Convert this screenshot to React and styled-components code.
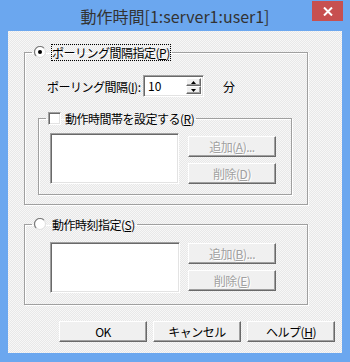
import styled, { createGlobalStyle } from "styled-components";

const GlobalStyle = createGlobalStyle`
  html, body {
    margin: 0;
    padding: 0;
  }
  body {
    font-family: "Noto Sans CJK JP", "Noto Sans", sans-serif;
    font-size: 12px;
    letter-spacing: -0.5px;
    color: #000;
  }
`;

const Window = styled.div`
  width: 350px;
  height: 362px;
  box-sizing: border-box;
  background: #6ba7ef;
  padding: 0 8px 9px;
  display: flex;
  flex-direction: column;
`;

const TitleBar = styled.div`
  height: 31px;
  display: grid;
  grid-template-columns: 1fr auto 1fr;
  align-items: center;
`;

const Title = styled.div`
  grid-column: 2;
  font-size: 16px;
  letter-spacing: 0;
  color: #333;
  white-space: nowrap;
  padding-top: 1px;
`;

const CloseButton = styled.div`
  grid-column: 3;
  justify-self: end;
  align-self: start;
  margin: 1px -1px 0 0;
  width: 31px;
  height: 20px;
  background: #c75050;
  display: flex;
  align-items: center;
  justify-content: center;
`;

const Client = styled.div`
  flex: 1;
  background: repeating-conic-gradient(#f7f7f7 0 25%, #e8e8e8 0 50%) 0 0 / 2px 2px;
  padding: 13px 7px 11px 16px;
  display: flex;
  flex-direction: column;
`;

const Group = styled.fieldset`
  margin: ${(p) => p.$mt || 0}px ${(p) => p.$mr || 0}px 0 0;
  padding: ${(p) => p.$pad};
  border: 1px solid #a0a0a0;
  box-shadow: inset 1px 1px #fff, 1px 1px #fff;
  min-width: 0;
`;

const Legend = styled.legend`
  height: 16px;
  padding: 0 2px;
  margin-left: ${(p) => p.$ml}px;
  display: flex;
  align-items: center;
  gap: ${(p) => p.$gap || 6}px;
  white-space: nowrap;
`;

const Focus = styled.span`
  outline: 1px dotted #000;
  outline-offset: 0;
  line-height: 15px;
`;

const Check = styled.span`
  width: 13px;
  height: 13px;
  box-sizing: border-box;
  background: #fff;
  border-style: solid;
  border-width: 1px;
  border-color: #a0a0a0 #fff #fff #a0a0a0;
  box-shadow: inset 1px 1px #696969, inset -1px -1px #e3e3e3;
`;

const SpinRow = styled.div`
  display: flex;
  align-items: center;
  margin-left: 9px;
`;

const FieldLabel = styled.span`
  width: ${(p) => p.$w}px;
  white-space: nowrap;
`;

const SpinBox = styled.div`
  width: 61px;
  height: 22px;
  box-sizing: border-box;
  display: flex;
  background: #fff;
  border-style: solid;
  border-width: 1px;
  border-color: #a0a0a0 #fff #fff #a0a0a0;
  box-shadow: inset 1px 1px #696969, inset -1px -1px #e3e3e3;
  padding: 2px 2px 2px 4px;
`;

const SpinValue = styled.span`
  flex: 1;
  line-height: 16px;
  letter-spacing: 0;
`;

const SpinButtons = styled.div`
  width: 15px;
  display: flex;
  flex-direction: column;
`;

const SpinBtn = styled.div`
  flex: 1;
  box-sizing: border-box;
  background: #f0f0f0;
  border-style: solid;
  border-width: 1px;
  border-color: #fff #696969 #696969 #fff;
  box-shadow: inset -1px -1px #a0a0a0;
  display: flex;
  align-items: center;
  justify-content: center;
`;

const Unit = styled.span`
  margin-left: 19px;
`;

const ListRow = styled.div`
  display: flex;
  align-items: flex-start;
  gap: ${(p) => p.$gap}px;
`;

const ListBox = styled.div`
  width: ${(p) => p.$w}px;
  height: 51px;
  box-sizing: border-box;
  background: #fff;
  border-style: solid;
  border-width: 1px;
  border-color: #a0a0a0 #fff #fff #a0a0a0;
  box-shadow: inset 1px 1px #696969, inset -1px -1px #e3e3e3;
`;

const ButtonColumn = styled.div`
  display: flex;
  flex-direction: column;
  gap: 6px;
  margin-top: ${(p) => p.$mt}px;
`;

const Button = styled.div`
  width: 88px;
  height: 21px;
  box-sizing: border-box;
  background: #f0f0f0;
  border-style: solid;
  border-width: 1px;
  border-color: #fff #696969 #696969 #fff;
  box-shadow: inset -1px -1px #a0a0a0;
  display: flex;
  align-items: center;
  justify-content: center;
  white-space: nowrap;
  color: ${(p) => (p.$disabled ? "#a0a0a0" : "#000")};
  text-shadow: ${(p) => (p.$disabled ? "1px 1px #fff" : "none")};
`;

const Footer = styled.div`
  margin-top: auto;
  display: flex;
  justify-content: flex-end;
  gap: 6px;
`;

function Radio({ checked }) {
  return (
    <svg width="12" height="12" viewBox="0 0 12 12">
      <defs>
        <linearGradient id="rg" x1="0" y1="0" x2="1" y2="1">
          <stop offset="0.45" stopColor="#7a7a7a" />
          <stop offset="0.55" stopColor="#e3e3e3" />
        </linearGradient>
      </defs>
      <circle cx="6" cy="6" r="5.5" fill="#fff" stroke="url(#rg)" strokeWidth="1.2" />
      {checked && <circle cx="6" cy="6" r="2" fill="#000" />}
    </svg>
  );
}

function Arrow({ up }) {
  return (
    <svg width="5" height="3" viewBox="0 0 5 3">
      <path d={up ? "M0 3 L2.5 0 L5 3 Z" : "M0 0 L2.5 3 L5 0 Z"} fill="#000" />
    </svg>
  );
}

export default function App() {
  return (
    <>
      <GlobalStyle />
      <Window>
        <TitleBar>
          <Title>動作時間[1:server1:user1]</Title>
          <CloseButton>
            <svg width="10" height="9" viewBox="0 0 10 9">
              <path d="M1 0.5 L9 8.5 M9 0.5 L1 8.5" stroke="#fff" strokeWidth="2" />
            </svg>
          </CloseButton>
        </TitleBar>
        <Client>
          <Group $mr={27} $pad="15px 15px 9px 13px">
            <Legend $ml={-6}>
              <Radio checked />
              <Focus>
                ポーリング間隔指定(<u>P</u>)
              </Focus>
            </Legend>
            <SpinRow>
              <FieldLabel $w={96}>
                ポーリング間隔(<u>I</u>):
              </FieldLabel>
              <SpinBox>
                <SpinValue>10</SpinValue>
                <SpinButtons>
                  <SpinBtn>
                    <Arrow up />
                  </SpinBtn>
                  <SpinBtn>
                    <Arrow />
                  </SpinBtn>
                </SpinButtons>
              </SpinBox>
              <Unit>分</Unit>
            </SpinRow>
            <Group $mt={13} $pad="7px 15px 10px 11px">
              <Legend $ml={-4} $gap={4}>
                <Check />
                <span>
                  動作時間帯を設定する(<u>R</u>)
                </span>
              </Legend>
              <ListRow $gap={9}>
                <ListBox $w={129} />
                <ButtonColumn $mt={3}>
                  <Button $disabled>
                    追加(<u>A</u>)...
                  </Button>
                  <Button $disabled>
                    削除(<u>D</u>)
                  </Button>
                </ButtonColumn>
              </ListRow>
            </Group>
          </Group>
          <Group $mt={11} $mr={27} $pad="10px 27px 11px 25px">
            <Legend $ml={-18}>
              <Radio />
              <span>
                動作時刻指定(<u>S</u>)
              </span>
            </Legend>
            <ListRow $gap={8}>
              <ListBox $w={130} />
              <ButtonColumn $mt={1}>
                <Button $disabled>
                  追加(<u>B</u>)...
                </Button>
                <Button $disabled>
                  削除(<u>E</u>)
                </Button>
              </ButtonColumn>
            </ListRow>
          </Group>
          <Footer>
            <Button>OK</Button>
            <Button>キャンセル</Button>
            <Button>
              ヘルプ(<u>H</u>)
            </Button>
          </Footer>
        </Client>
      </Window>
    </>
  );
}
